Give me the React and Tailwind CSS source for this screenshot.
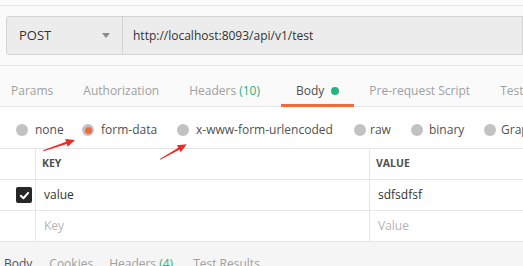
import React from 'react'

const TABS = [
  { label: 'Params' },
  { label: 'Authorization' },
  { label: 'Headers', count: '(10)' },
  { label: 'Body', active: true, dot: true },
  { label: 'Pre-request Script' },
  { label: 'Tests' },
]

// widths keep each radio on the same column as the original panel
const MODES = [
  { label: 'none', w: 'w-[66px]' },
  { label: 'form-data', checked: true, w: 'w-[95px]' },
  { label: 'x-www-form-urlencoded', w: 'w-[177px]' },
  { label: 'raw', w: 'w-[57px]', gap: 'ml-[4px]' },
  { label: 'binary', w: 'w-[73px]', gap: 'ml-[6px]' },
  { label: 'GraphQL', w: 'w-[80px]', gap: 'ml-[5px]' },
]

function Radio({ checked }) {
  return (
    <span className="w-[12px] h-[12px] rounded-full bg-[#c2c2c2] flex items-center justify-center shrink-0">
      {checked && <span className="w-[7px] h-[7px] rounded-full bg-[#f26b3a]" />}
    </span>
  )
}

function Arrows() {
  // annotation arrows drawn over the screenshot
  return (
    <svg className="absolute inset-0 pointer-events-none" width="523" height="266">
      <polygon
        fill="#ee2b24"
        points="43.5,151.2 66.8,144 67.7,146.7 75,140 65.2,139.1 66.1,141.7 43.1,150.2"
      />
      <polygon
        fill="#ee2b24"
        points="160.3,159.7 179.4,149.8 180.8,152.2 186.7,144.3 176.9,145.2 178.3,147.7 159.8,158.9"
      />
    </svg>
  )
}

export default function App() {
  return (
    <div className="relative w-[523px] h-[266px] overflow-hidden bg-[#fafafa] text-[#505050] font-['Open_Sans',sans-serif]">
      {/* top strip */}
      <div className="h-[6px] border-b border-[#e6e6e6]" />

      {/* url bar */}
      <div className="flex pl-[6px] pt-[10px] pb-[10px] border-b border-[#e6e6e6]">
        <div className="flex w-full h-[39px] border border-[#d4d4d4] rounded-l-[3px] bg-[#ececec] -mr-[10px]">
          <div className="w-[116px] shrink-0 flex items-center justify-between pl-[12px] pr-[12px] border-r border-[#d4d4d4]">
            <span className="text-[13px] text-[#333]">POST</span>
            <span className="w-0 h-0 border-l-[4px] border-r-[4px] border-t-[5px] border-l-transparent border-r-transparent border-t-[#8a8a8a]" />
          </div>
          <div className="flex items-center pl-[10px] text-[12px] text-[#333]">
            http://localhost:8093/api/v1/test
          </div>
        </div>
      </div>

      {/* request tabs */}
      <div className="flex h-[41px] border-b border-[#e6e6e6] -ml-[4px] whitespace-nowrap">
        {TABS.map((t) => (
          <div
            key={t.label}
            className={
              t.active
                ? 'relative flex items-center px-[15px] pt-[9px] ml-[6px] text-[12px] text-[#505050]'
                : 'relative flex items-center px-[15px] pt-[9px] text-[12px] text-[#a0a0a0]'
            }
          >
            {t.label}
            {t.count && <span className="ml-[3px] text-[#26b47f]">{t.count}</span>}
            {t.dot && <span className="ml-[7px] w-[8px] h-[8px] rounded-full bg-[#26b47f]" />}
            {t.active && <span className="absolute left-0 right-0 bottom-[-1px] h-[3px] bg-[#f26b3a]" />}
          </div>
        ))}
      </div>

      {/* body modes */}
      <div className="flex items-center h-[42px] pl-[16px] pt-[5px] bg-white border-b border-[#e6e6e6] whitespace-nowrap">
        {MODES.map((m) => (
          <div key={m.label} className={`${m.w} shrink-0 flex items-center text-[12px] text-[#505050]`}>
            <Radio checked={m.checked} />
            <span className={m.gap || 'ml-[7px]'}>{m.label}</span>
          </div>
        ))}
      </div>

      {/* key / value table */}
      <div className="bg-white text-[12px]">
        <div className="flex h-[31px] border-b border-[#e6e6e6]">
          <div className="w-[36px] shrink-0 border-r border-[#e6e6e6]" />
          <div className="w-[334px] shrink-0 flex items-center pl-[6px] border-r border-[#e6e6e6] text-[10.5px] font-bold text-[#505050]">
            KEY
          </div>
          <div className="flex-1 flex items-center pl-[6px] text-[10.5px] font-bold text-[#505050]">VALUE</div>
        </div>
        <div className="flex h-[31px] border-b border-[#e6e6e6]">
          <div className="w-[36px] shrink-0 flex items-center pl-[16px] border-r border-[#e6e6e6]">
            <span className="w-[16px] h-[16px] rounded-[2px] bg-[#262626] flex items-center justify-center">
              <svg width="11" height="11" viewBox="0 0 12 12">
                <path d="M2 6.3 L4.8 9 L10 3.2" fill="none" stroke="#fff" strokeWidth="2.2" strokeLinecap="round" strokeLinejoin="round" />
              </svg>
            </span>
          </div>
          <div className="w-[334px] shrink-0 flex items-center pl-[8px] border-r border-[#e6e6e6] text-[#333]">value</div>
          <div className="flex-1 flex items-center pl-[8px] text-[#333]">sdfsdfsf</div>
        </div>
        <div className="flex h-[31px] border-b border-[#e6e6e6]">
          <div className="w-[36px] shrink-0 border-r border-[#e6e6e6]" />
          <div className="w-[334px] shrink-0 flex items-center pl-[8px] border-r border-[#e6e6e6] text-[#b5b5b5]">Key</div>
          <div className="flex-1 flex items-center pl-[8px] text-[#b5b5b5]">Value</div>
        </div>
      </div>

      {/* response tabs */}
      <div className="flex bg-[#f5f5f5] pl-[4px] pt-[13px] h-[40px] text-[12px] whitespace-nowrap">
        <span className="mr-[17px] text-[#505050]">Body</span>
        <span className="mr-[16px] text-[#a0a0a0]">Cookies</span>
        <span className="mr-[20px] text-[#a0a0a0]">
          Headers <span className="text-[#26b47f]">(4)</span>
        </span>
        <span className="text-[#a0a0a0]">Test Results</span>
      </div>

      <Arrows />
    </div>
  )
}
